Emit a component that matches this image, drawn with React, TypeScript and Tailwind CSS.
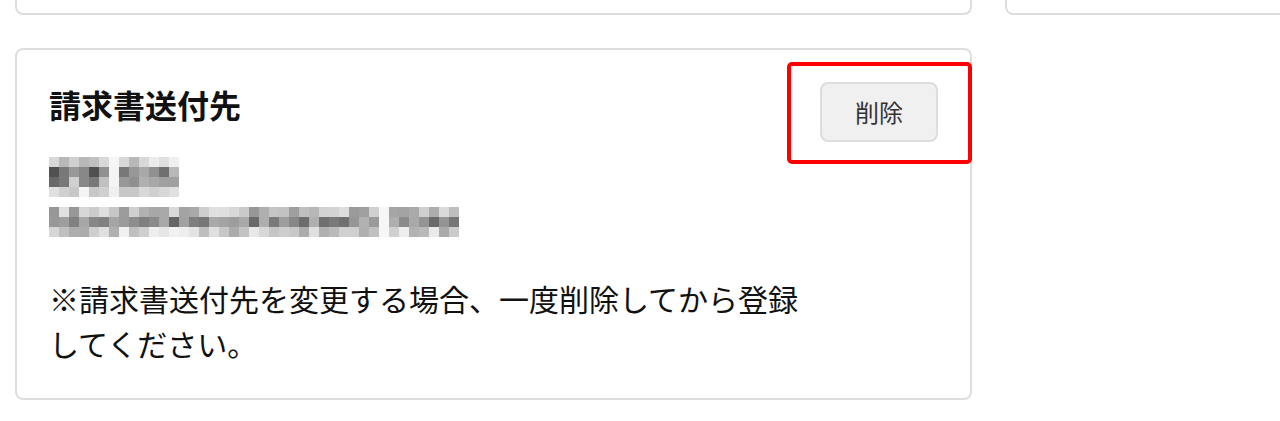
import React from "react";

const nameGrid: number[][] = [
  [0xd8, 0xb8, 0xd0, 0xb8, 0xc0, 0xd8, 0xf6, 0xd8, 0xb8, 0xd8, 0xec, 0xe0, 0xf0],
  [0x50, 0x78, 0x98, 0x88, 0x50, 0x90, 0xf4, 0x78, 0x98, 0xa8, 0x90, 0x70, 0xb8],
  [0x68, 0x78, 0xd0, 0x88, 0x78, 0xc0, 0xf4, 0x98, 0x90, 0xb0, 0xa8, 0xa0, 0xa0],
  [0xe0, 0xd0, 0xc8, 0xf4, 0xc8, 0xd0, 0xf0, 0xc8, 0xc8, 0xd8, 0xd0, 0xd8, 0xe0],
];

function hash(i: number) {
  const x = Math.sin(i * 12.9898 + 4.1414) * 43758.5453;
  return x - Math.floor(x);
}

const emailRanges: [number, number][] = [
  [150, 225],
  [100, 180],
  [170, 248],
];

const emailGrid: number[][] = emailRanges.map(([lo, hi], r) =>
  Array.from({ length: 41 }, (_, c) => {
    if (c === 33) return 0xf6;
    const h = hash(r * 100 + c);
    return Math.round(lo + (hi - lo) * h);
  })
);

function Mosaic({ grid, block = 10 }: { grid: number[][]; block?: number }) {
  const w = grid[0].length * block;
  const h = grid.length * block;
  return (
    <svg width={w} height={h} viewBox={`0 0 ${w} ${h}`} shapeRendering="crispEdges" className="block">
      {grid.map((row, r) =>
        row.map((v, c) => (
          <rect
            key={`${r}-${c}`}
            x={c * block}
            y={r * block}
            width={block}
            height={block}
            fill={`rgb(${v},${v},${v})`}
          />
        ))
      )}
    </svg>
  );
}

export default function App() {
  return (
    <div
      className="w-full h-[421px] overflow-hidden bg-white pl-[15px]"
      style={{ fontFamily: '"Noto Sans CJK JP", "Noto Sans", sans-serif' }}
    >
      <div className="grid grid-cols-[957px_320px] gap-x-[33px]">
        <div className="h-[15px] border-2 border-t-0 border-[#dddddd] rounded-b-[8px]" />
        <div className="h-[15px] border-2 border-t-0 border-[#dddddd] rounded-b-[8px]" />

        <div className="relative mt-[33px] border-2 border-[#dddddd] rounded-[8px] p-[32px]">
          <div className="flex items-start justify-between">
            <div className="flex-1 min-w-0">
              <h2 className="text-[32px] leading-[44px] font-bold text-[#111111]">請求書送付先</h2>
              <div className="mt-[31px]">
                <Mosaic grid={nameGrid} />
              </div>
              <div className="mt-[10px]">
                <Mosaic grid={emailGrid} />
              </div>
              <p className="mt-[39px] text-[30px] leading-[45px] text-[#111111]">
                ※請求書送付先を変更する場合、一度削除してから登録してください。
              </p>
            </div>
            <button className="shrink-0 w-[118px] h-[60px] rounded-[8px] border-2 border-[#dddddd] bg-[#f0f0f0] text-[24px] text-[#333333] flex items-center justify-center">
              削除
            </button>
          </div>
          <div className="absolute left-[770px] top-[12px] w-[185px] h-[102px] border-4 border-[#ff0000] rounded-[5px] pointer-events-none" />
        </div>
        <div />
      </div>
    </div>
  );
}
